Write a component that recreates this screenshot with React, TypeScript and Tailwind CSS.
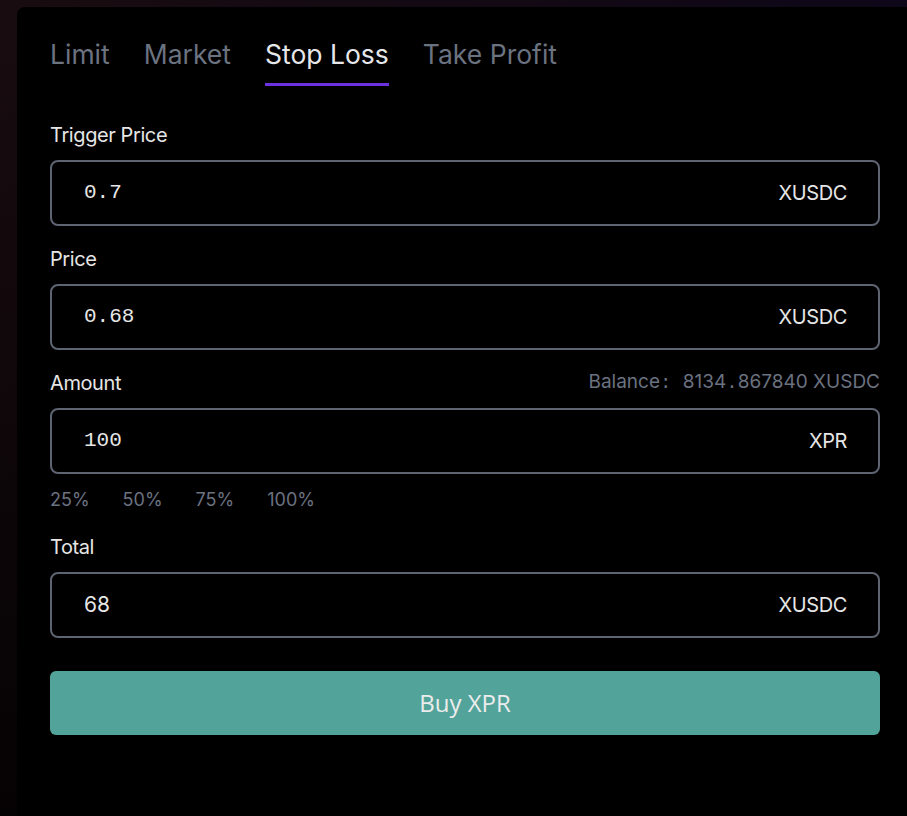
import React from "react";

const tabs = ["Limit", "Market", "Stop Loss", "Take Profit"];
const percents = ["25%", "50%", "75%", "100%"];

type FieldProps = {
  label: string;
  value: string;
  unit: string;
  mono?: boolean;
  right?: React.ReactNode;
};

const Field = ({ label, value, unit, mono = true, right }: FieldProps) => (
  <div>
    <div className="flex h-[28px] items-center justify-between">
      <span className="text-[20px] tracking-[-0.02em] text-[#e6e6e6]">{label}</span>
      {right}
    </div>
    <div className="mt-[11px] flex h-[66px] items-center justify-between rounded-lg border-2 border-[#5f6472] pl-[32px] pr-[31px]">
      <span
        className={
          mono
            ? "font-['Liberation_Mono',monospace] text-[21px] text-[#e6e6e6]"
            : "text-[21px] text-[#e6e6e6]"
        }
      >
        {value}
      </span>
      <span className="text-[20px] tracking-[-0.02em] text-[#e6e6e6]">{unit}</span>
    </div>
  </div>
);

export default function App() {
  return (
    <div className="h-[816px] w-[907px] overflow-hidden bg-[linear-gradient(180deg,rgba(0,0,0,0)_0%,#050203_100%),linear-gradient(90deg,#190c10_0%,#120914_60%,#0e0719_100%)] pl-[17px] pt-[7px] font-['Inter',sans-serif]">
      <div className="h-[900px] w-[896px] rounded-lg bg-black px-[33px] pt-[28px]">
        <div className="flex gap-[34px]">
          {tabs.map((t) => (
            <div key={t} className="flex flex-col">
              <span
                className={
                  t === "Stop Loss"
                    ? "h-[38px] text-[26.5px] leading-[38px] text-[#e5e7eb]"
                    : "h-[38px] text-[26.5px] leading-[38px] text-[#6b7280]"
                }
              >
                {t}
              </span>
              <div
                className={
                  t === "Stop Loss"
                    ? "mt-[10px] h-[3px] w-full bg-[#6d32e0]"
                    : "mt-[10px] h-[3px] w-full"
                }
              />
            </div>
          ))}
        </div>

        <div className="mt-[35px] flex flex-col gap-[19px]">
          <Field label="Trigger Price" value="0.7" unit="XUSDC" />
          <Field label="Price" value="0.68" unit="XUSDC" />
          <div>
            <Field
              label="Amount"
              value="100"
              unit="XPR"
              right={
                <span className="text-[19px] text-[#6b7280]">
                  Balance<span className="font-['Liberation_Mono',monospace]">: </span>8134
                  <span className="font-['Liberation_Mono',monospace]">.</span>867840 XUSDC
                </span>
              }
            />
            <div className="mt-[12px] flex h-[26px] items-center gap-[33px] text-[18px] text-[#6b7280]">
              {percents.map((p) => (
                <span key={p}>{p}</span>
              ))}
            </div>
          </div>
          <div className="mt-[2px]">
            <Field label="Total" value="68" unit="XUSDC" mono={false} />
          </div>
        </div>

        <button className="mt-[33px] flex h-[64px] w-full items-center justify-center rounded-md bg-[#52a39a] font-['Open_Sans',sans-serif] text-[24px] text-[#ececec]">
          Buy XPR
        </button>
      </div>
    </div>
  );
}
